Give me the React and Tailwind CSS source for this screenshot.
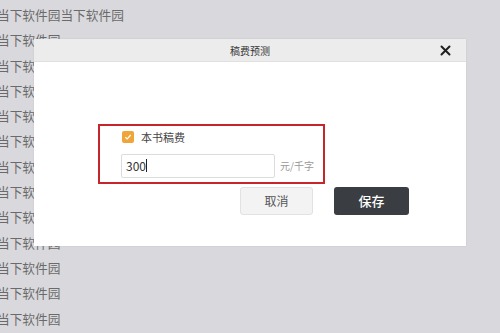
import { useState } from 'react';

const ROWS = [
  '当下软件园当下软件园',
  '当下软件园',
  '当下软件园',
  '当下软件园',
  '当下软件园',
  '当下软件园',
  '当下软件园',
  '当下软件园',
  '当下软件园',
  '当下软件园',
  '当下软件园',
  '当下软件园',
  '当下软件园',
];

const font = { fontFamily: '"Noto Sans CJK SC", "Noto Sans", sans-serif' };

export default function App() {
  const [checked, setChecked] = useState(true);
  const [value, setValue] = useState('300');

  return (
    <div className="relative w-[500px] h-[333px] overflow-hidden bg-[#d9d9dd]" style={font}>
      {/* watermark rows */}
      <div className="flex flex-col pt-[2px] ml-[-3px] text-[12.7px] leading-[25.3px] text-[#6a6a6a]">
        {ROWS.map((r, i) => (
          <div key={i} className="whitespace-nowrap">{r}</div>
        ))}
      </div>

      {/* dialog */}
      <div className="absolute left-[34px] top-[39px] w-[432px] h-[207px] bg-white flex flex-col shadow-[0_0_2px_rgba(0,0,0,0.08)]">
        <div className="relative h-[23px] bg-[#ececec] border-b border-[#e0e0e0] flex items-center justify-center">
          <span className="text-[10px] text-[#333]">稿费预测</span>
          <button className="absolute right-[14px] top-[5px] w-[13px] h-[13px] flex items-center justify-center">
            <svg width="11" height="11" viewBox="0 0 11 11">
              <path d="M1.5 1.5 L9.5 9.5 M9.5 1.5 L1.5 9.5" stroke="#1f1f1f" strokeWidth="2" strokeLinecap="round" />
            </svg>
          </button>
        </div>

        <div className="flex flex-col">
          <div className="ml-[64px] mt-[62px] w-[227px] h-[60px] border-2 border-[#c4262b] flex flex-col">
            <label className="flex items-center ml-[22px] mt-[3px] cursor-pointer">
              <span
                onClick={() => setChecked(!checked)}
                className={`w-[12px] h-[12px] rounded-[2px] flex items-center justify-center ${checked ? 'bg-[#f0a53a]' : 'bg-white border border-[#ccc]'}`}
              >
                {checked && (
                  <svg width="8" height="8" viewBox="0 0 8 8">
                    <path d="M1.3 4.2 L3.2 6 L6.7 2" stroke="#fff" strokeWidth="1.2" fill="none" />
                  </svg>
                )}
              </span>
              <span className="ml-[7px] text-[11px] text-[#444]">本书稿费</span>
            </label>
            <div className="flex items-center ml-[21px] mt-[8px]">
              <div className="w-[154px] h-[24px] border border-[#dcdcdc] rounded-[2px] flex items-center px-[4px] bg-white">
                <input
                  value={value}
                  onChange={e => setValue(e.target.value)}
                  className="w-[20px] text-[12px] text-[#333] outline-none bg-transparent"
                  style={font}
                />
                <span className="w-[1px] h-[13px] bg-[#222]" />
              </div>
              <span className="ml-[5px] text-[10px] text-[#999]">元/千字</span>
            </div>
          </div>

          <div className="flex ml-[206px] mt-[3px] gap-[21px]">
            <button className="w-[73px] h-[28px] bg-[#f3f3f3] border border-[#e2e2e2] rounded-[3px] text-[12px] text-[#555]">取消</button>
            <button className="w-[75px] h-[28px] bg-[#3a3d41] rounded-[3px] text-[13px] text-white font-medium">保存</button>
          </div>
        </div>
      </div>
    </div>
  );
}
